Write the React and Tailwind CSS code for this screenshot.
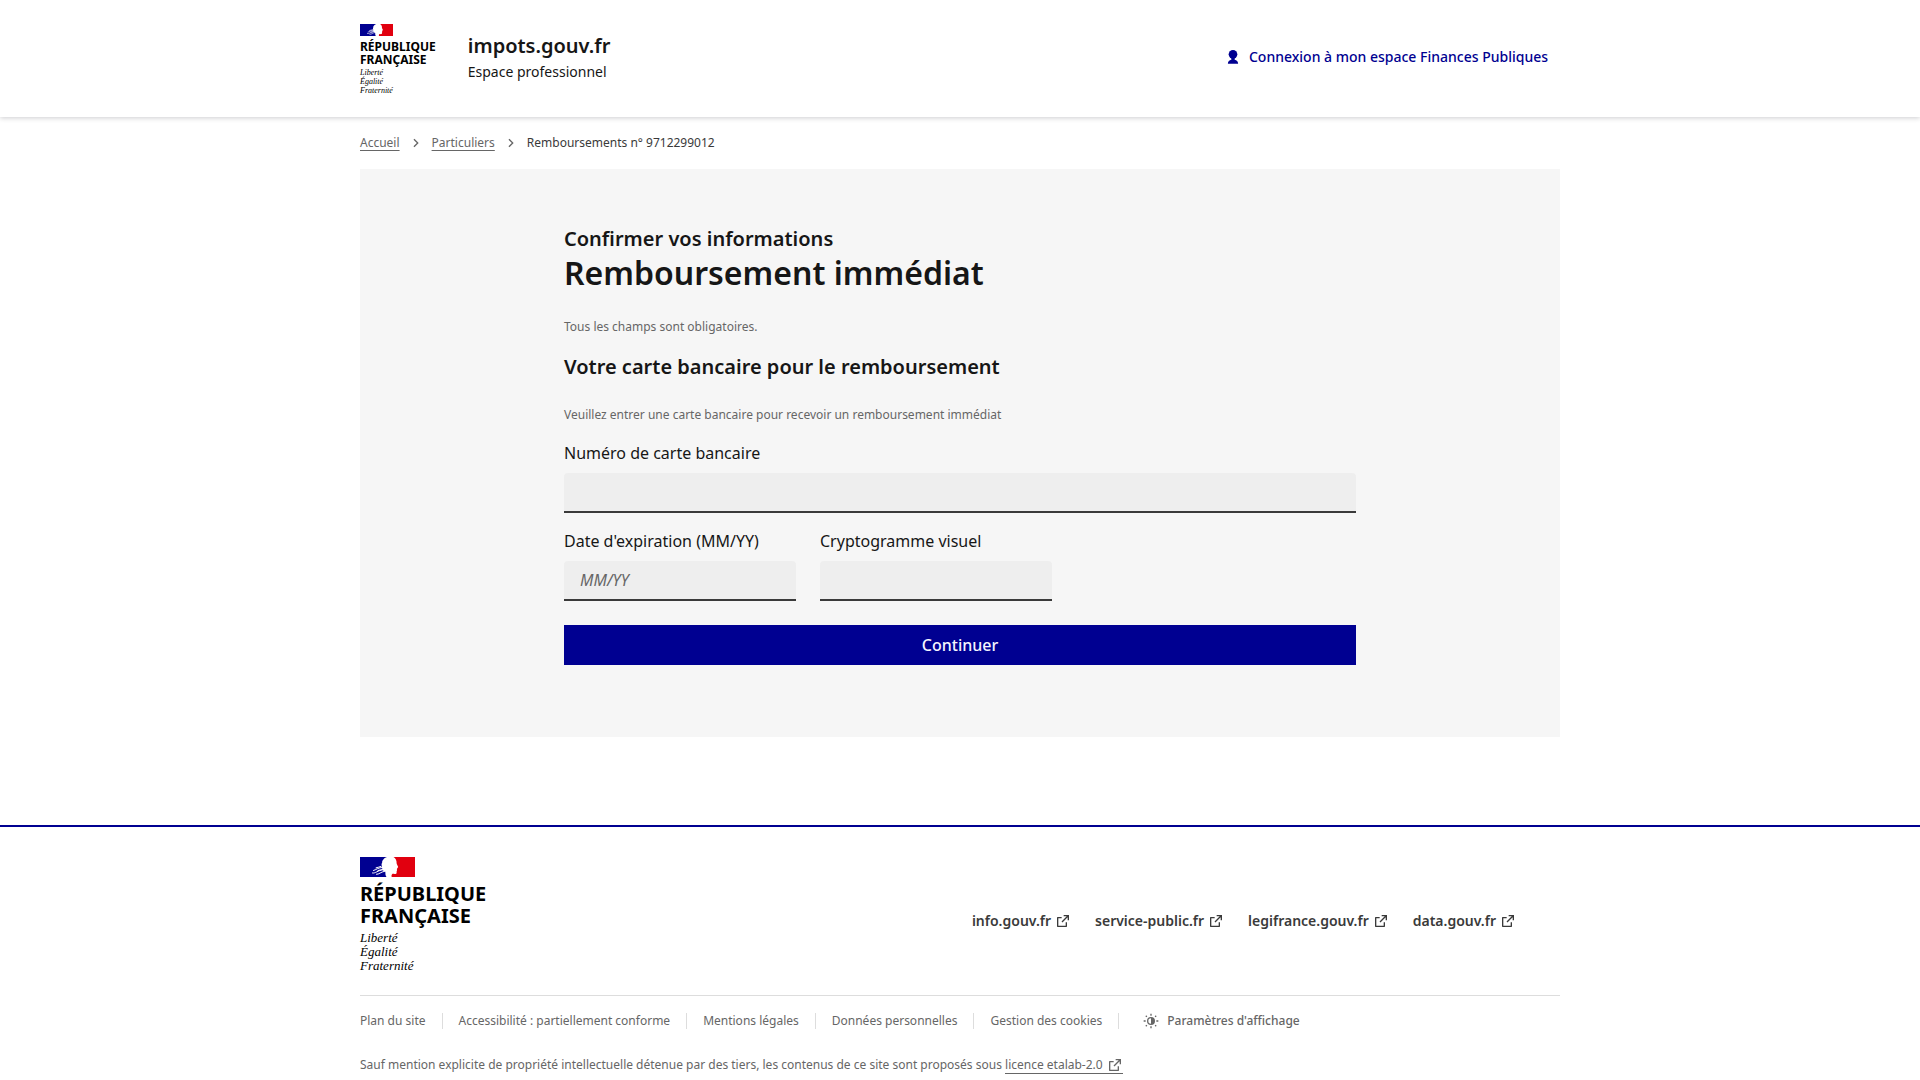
import clsx from 'clsx';

const footerLinks = ['info.gouv.fr', 'service-public.fr', 'legifrance.gouv.fr', 'data.gouv.fr'];

const legalLinks = [
  'Plan du site',
  'Accessibilité : partiellement conforme',
  'Mentions légales',
  'Données personnelles',
  'Gestion des cookies',
];

const ExternalIcon = () => (
  <svg viewBox="0 0 24 24" fill="currentColor" aria-hidden="true" className="size-4">
    <path d="M10 6v2H5v11h11v-5h2v6a1 1 0 0 1-1 1H4a1 1 0 0 1-1-1V7a1 1 0 0 1 1-1h6Zm11-3v8h-2V6.413l-7.793 7.794-1.414-1.414L17.585 5H13V3h8Z" />
  </svg>
);

const UserIcon = () => (
  <svg viewBox="0 0 24 24" fill="currentColor" aria-hidden="true" className="size-4">
    <circle cx="12" cy="8" r="6.5" />
    <path d="M9.500 13h5v3c3 .4 5.200 2.600 5.200 6H4.300c0-3.400 2.200-5.600 5.200-6Z" />
  </svg>
);

const ThemeIcon = () => (
  <svg viewBox="0 0 24 24" fill="currentColor" aria-hidden="true" className="size-4">
    <path fillRule="evenodd" d="M12 6a6 6 0 1 1 0 12 6 6 0 0 1 0-12Zm0 2a4 4 0 0 0 0 8Z" />
    <path d="M11 1h2v3h-2zM11 20h2v3h-2zM1 11h3v2H1zM20 11h3v2h-3zM3.500 4.900 4.900 3.500 6.500 5.100 5.100 6.500zM17.500 18.900 18.900 17.500l1.600 1.600-1.400 1.400zM19.100 3.500l1.400 1.400-1.600 1.600-1.400-1.400zM5.100 17.500l1.400 1.400-1.600 1.600-1.400-1.400z" />
  </svg>
);

// Marianne in profile, left in white between the blue and the red
const Flag = ({ className }) => (
  <svg viewBox="0 0 55 20" aria-hidden="true" className={className}>
    <path fill="#000091" d="M0 0h27c-1.800.6-3 1.400-3.600 2.600-1 .8-1.400 2-1.200 3-.8 1.200-.8 2.400-.3 3.400-.3 1.200 0 2.400.8 3.200.2 1.400 1.200 2.200 2.600 2.600.3 1.600-.3 3.200 1.200 5.200H0Z" />
    <path fill="#e1000f" d="M33.500 0H55v20H31.700c-.4-1.200-.2-2.400.8-3.200 1.400 0 3 .4 3.900-.4.600-.8-.1-1.400.3-2.200.3-.6.500-.9.100-1.400.6-.8.200-1.400.5-1.900.5-.4 1-.6.800-1.200-.6-1.400-1.400-2.300-1.500-3.600.2-2.600-1.100-4.900-3.100-6.100Z" />
    <g fill="none" stroke="#fff" strokeLinecap="round" strokeWidth="1">
      <path d="M13.500 13.500c2.500-.6 5-3.200 9-3" />
      <path d="M16 10.800c1.800-.8 3.400-.5 5-1.300" />
      <path d="M12.500 16c3 .6 5-2.600 10.500-3.200" />
      <path d="M16.500 17.300c3 0 4-2.300 8-3" />
      <path d="M18 13.500l4.500-1" />
    </g>
  </svg>
);

const Logo = ({ large = false }) => (
  <div className="text-black">
    <Flag className={large ? 'h-5 w-[55px]' : 'h-3 w-[33px]'} />
    <p className={clsx('font-bold', large ? 'mt-[6px] text-[20px] leading-[22px]' : 'mt-1 text-[12px] leading-[13px]')}>
      RÉPUBLIQUE
      <br />
      FRANÇAISE
    </p>
    <p className={clsx("font-['Liberation_Serif',serif] italic", large ? 'mt-1 text-[13px] leading-[14px]' : 'mt-[2px] text-[8px] leading-[9px]')}>
      Liberté
      <br />
      Égalité
      <br />
      Fraternité
    </p>
  </div>
);

const Chevron = () => (
  <svg viewBox="0 0 24 24" fill="currentColor" aria-hidden="true" className="mx-2 size-4">
    <path d="M13.200 12 8.200 7.100l1.500-1.500L16 12l-6.300 6.400-1.500-1.500z" />
  </svg>
);

const Header = () => (
  <header className="relative bg-white shadow-[0_1px_5px_rgba(0,0,18,0.2)]">
    <div className="mx-auto flex max-w-[1200px] items-start pb-[22px] pt-6">
      <Logo />
      <a href="#" className="ml-8 mt-2">
        <span className="block text-[20px] font-semibold leading-7">impots.gouv.fr</span>
        <span className="block text-sm leading-6">Espace professionnel</span>
      </a>
      <a href="#" className="ml-auto mr-3 mt-[21px] flex items-center gap-2 text-sm font-medium leading-6 text-[#000091]">
        <UserIcon />
        Connexion à mon espace Finances Publiques
      </a>
    </div>
  </header>
);

const Breadcrumb = () => (
  <nav aria-label="Fil d'Ariane" className="flex items-center py-4 text-xs leading-5 text-[#666]">
    <a href="#" className="underline underline-offset-[3px]">Accueil</a>
    <Chevron />
    <a href="#" className="underline underline-offset-[3px]">Particuliers</a>
    <Chevron />
    <span className="text-[#3a3a3a]">Remboursements n° 9712299012</span>
  </nav>
);

const Field = ({ id, label, className, ...props }) => (
  <div className={className}>
    <label htmlFor={id} className="block leading-6">{label}</label>
    <input
      id={id}
      type="text"
      className="mt-2 block h-10 w-full rounded-t border-b-2 border-[#3a3a3a] bg-[#eee] px-4 placeholder:italic placeholder:text-[#666]"
      {...props}
    />
  </div>
);

const CardForm = () => (
  <form className="bg-[#f6f6f6] px-6 pb-[72px] pt-14" onSubmit={(e) => e.preventDefault()}>
    <div className="mx-auto max-w-[792px]">
      <h1>
        <span className="block text-[20px] font-semibold leading-7">Confirmer vos informations</span>
        <span className="block text-[32px] font-semibold leading-10">Remboursement immédiat</span>
      </h1>
      <p className="mt-6 text-xs leading-5 text-[#666]">Tous les champs sont obligatoires.</p>
      <h2 className="mt-4 text-[20px] font-semibold leading-7">Votre carte bancaire pour le remboursement</h2>
      <p className="mt-6 text-xs leading-5 text-[#666]">
        Veuillez entrer une carte bancaire pour recevoir un remboursement immédiat
      </p>
      <Field id="card" label="Numéro de carte bancaire" className="mt-4" />
      <div className="mt-4 flex gap-6">
        <Field id="expiry" label="Date d'expiration (MM/YY)" placeholder="MM/YY" className="w-[232px]" />
        <Field id="cvv" label="Cryptogramme visuel" className="w-[232px]" />
      </div>
      <button type="submit" className="mt-6 h-10 w-full bg-[#000091] font-medium text-[#f5f5fe]">
        Continuer
      </button>
    </div>
  </form>
);

const Footer = () => (
  <footer className="mt-22 border-t-2 border-[#000091] pt-[30px]">
    <div className="mx-auto max-w-[1200px]">
      <div className="flex items-center justify-between pb-[22px]">
        <Logo large />
        <ul className="mr-11 mt-3 flex gap-6 text-sm font-semibold leading-6 text-[#3a3a3a]">
          {footerLinks.map((link) => (
            <li key={link}>
              <a href="#" className="flex items-center gap-1">
                {link}
                <ExternalIcon />
              </a>
            </li>
          ))}
        </ul>
      </div>
      <div className="border-t border-[#ddd] pt-[15px] text-xs text-[#666]">
        <ul className="flex items-center leading-5">
          {legalLinks.map((link) => (
            <li key={link} className="mr-4 flex items-center">
              <a href="#">{link}</a>
              <span className="ml-4 h-4 w-px bg-[#ddd]" />
            </li>
          ))}
          <li>
            <button type="button" className="ml-2 flex items-center gap-2 font-medium">
              <ThemeIcon />
              Paramètres d'affichage
            </button>
          </li>
        </ul>
        <p className="mt-6 leading-5">
          Sauf mention explicite de propriété intellectuelle détenue par des tiers, les contenus de ce site sont proposés sous{' '}
          <a href="#" className="inline-flex items-center gap-1 border-b border-[#666] leading-4">
            licence etalab-2.0
            <ExternalIcon />
          </a>
        </p>
      </div>
    </div>
  </footer>
);

export default function App() {
  return (
    <div className="min-h-screen bg-white font-['Noto_Sans',sans-serif] text-[#161616]">
      <Header />
      <main className="mx-auto max-w-[1200px]">
        <Breadcrumb />
        <CardForm />
      </main>
      <Footer />
    </div>
  );
}
